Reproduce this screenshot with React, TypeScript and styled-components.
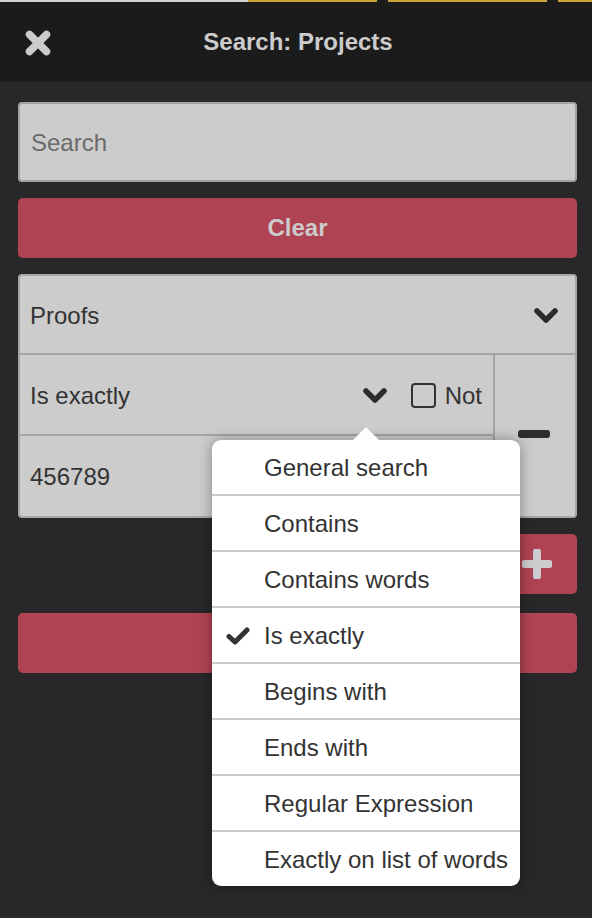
import React from "react";
import styled, { createGlobalStyle } from "styled-components";

const Global = createGlobalStyle`
  html, body { margin: 0; padding: 0; background: #282828; }
  body { font-family: "Liberation Sans", Arial, Helvetica, sans-serif; }
  * { box-sizing: border-box; }
`;

const Page = styled.div`
  width: 592px;
  min-height: 918px;
  background: #282828;
  display: flex;
  flex-direction: column;
`;

const TopStrip = styled.div`
  display: flex;
  height: 2px;
  background: #1b1b1b;
`;

const StripSeg = styled.div<{ $w?: number; $c: string }>`
  background: ${(p) => p.$c};
  ${(p) => (p.$w ? `width: ${p.$w}px;` : "flex: 1;")}
`;

const Header = styled.header`
  height: 80px;
  background: #1b1b1b;
  display: flex;
  align-items: center;
  justify-content: center;
  position: relative;
`;

const CloseBtn = styled.button`
  position: absolute;
  left: 25px;
  top: 28px;
  width: 26px;
  height: 26px;
  padding: 0;
  border: none;
  background: none;
  display: flex;
`;

const Title = styled.h1`
  margin: 0;
  font-size: 24px;
  font-weight: bold;
  color: #cccccc;
  padding-left: 4px;
`;

const Content = styled.main`
  position: relative;
  padding: 20px 15px 20px 18px;
  display: flex;
  flex-direction: column;
`;

const SearchInput = styled.div`
  height: 80px;
  background: #cccccc;
  border: 2px solid #a2a2a2;
  border-radius: 4px;
  display: flex;
  align-items: center;
  padding-left: 11px;
  padding-top: 2px;
  font-size: 24px;
  color: #6a6a6a;
`;

const RedButton = styled.button<{ $w?: number; $mt: number }>`
  height: 60px;
  margin-top: ${(p) => p.$mt}px;
  ${(p) => (p.$w ? `width: ${p.$w}px; align-self: flex-end;` : "width: 100%;")}
  background: #b04353;
  border: none;
  border-radius: 5px;
  color: #cccccc;
  font-family: inherit;
  font-size: 24px;
  font-weight: bold;
  display: flex;
  align-items: center;
  justify-content: center;
  padding: 0;
`;

const Group = styled.section`
  margin-top: 16px;
  background: #cccccc;
  border: 2px solid #a5a5a5;
  border-radius: 4px;
  display: grid;
  grid-template-columns: 1fr 80px;
  grid-template-rows: 79px 81px 80px;
`;

const Cell = styled.div<{ $span?: boolean; $bottom?: boolean; $right?: boolean }>`
  display: flex;
  align-items: center;
  padding: 2px 10px 0;
  font-size: 24px;
  color: #333333;
  ${(p) => (p.$span ? "grid-column: 1 / 3;" : "")}
  ${(p) => (p.$bottom ? "border-bottom: 2px solid #a5a5a5;" : "")}
  ${(p) => (p.$right ? "border-right: 2px solid #a5a5a5;" : "")}
`;

const CellText = styled.span`
  flex: 1;
`;

const MinusCell = styled.div`
  grid-column: 2;
  grid-row: 2 / 4;
  display: flex;
  align-items: center;
  justify-content: center;
  padding-right: 2px;
`;

const Chevron = styled.svg<{ $mr: number }>`
  width: 26px;
  height: 17px;
  margin-right: ${(p) => p.$mr}px;
`;

const CheckBox = styled.span`
  width: 25px;
  height: 25px;
  border: 2px solid #333;
  border-radius: 4px;
  margin-right: 9px;
`;

const NotLabel = styled.span`
  color: #333;
  margin-right: 1px;
`;

const Minus = styled.span`
  width: 32px;
  height: 8px;
  border-radius: 3px;
  background: #2e2e2e;
  margin-top: -4px;
`;

const PlusIcon = styled.svg`
  width: 30px;
  height: 30px;
  margin-left: 2px;
`;

const Popup = styled.div`
  position: absolute;
  left: 212px;
  top: 358px;
  width: 308px;
  background: #ffffff;
  border-radius: 9px;
  box-shadow: 0 0 14px rgba(0, 0, 0, 0.35);
  display: flex;
  flex-direction: column;
`;

const Arrow = styled.span`
  position: absolute;
  left: 140px;
  top: -13px;
  width: 0;
  height: 0;
  border-left: 14px solid transparent;
  border-right: 14px solid transparent;
  border-bottom: 14px solid #ffffff;
`;

const Item = styled.div<{ $last?: boolean }>`
  height: ${(p) => (p.$last ? 54 : 56)}px;
  display: flex;
  align-items: center;
  padding-top: 2px;
  font-size: 24px;
  color: #333333;
  ${(p) => (p.$last ? "" : "border-bottom: 2px solid #cccccc;")}
`;

const CheckSlot = styled.span`
  width: 52px;
  padding-left: 14px;
  display: flex;
  align-items: center;
`;

const chevron = (
  <path d="M4 4 L13 13 L22 4" fill="none" stroke="#2b2b2b" strokeWidth="5.5" strokeLinecap="round" strokeLinejoin="round" />
);

const items = [
  "General search",
  "Contains",
  "Contains words",
  "Is exactly",
  "Begins with",
  "Ends with",
  "Regular Expression",
  "Exactly on list of words",
];

export default function App() {
  return (
    <Page>
      <Global />
      <TopStrip>
        <StripSeg $w={248} $c="#d2d2d2" />
        <StripSeg $w={129} $c="#c9a23c" />
        <StripSeg $w={11} $c="#1b1b1b" />
        <StripSeg $w={159} $c="#c9a23c" />
        <StripSeg $w={11} $c="#1b1b1b" />
        <StripSeg $c="#c9a23c" />
      </TopStrip>
      <Header>
        <CloseBtn aria-label="Close">
          <svg width="26" height="26" viewBox="0 0 26 26">
            <path d="M4.5 4.5 L21.5 21.5 M21.5 4.5 L4.5 21.5" stroke="#cccccc" strokeWidth="7.5" strokeLinecap="round" />
          </svg>
        </CloseBtn>
        <Title>Search: Projects</Title>
      </Header>
      <Content>
        <SearchInput>Search</SearchInput>
        <RedButton $mt={16}>Clear</RedButton>
        <Group>
          <Cell $span $bottom>
            <CellText>Proofs</CellText>
            <Chevron $mr={6} viewBox="0 0 26 17">{chevron}</Chevron>
          </Cell>
          <Cell $bottom $right>
            <CellText>Is exactly</CellText>
            <Chevron $mr={23} viewBox="0 0 26 17">{chevron}</Chevron>
            <CheckBox />
            <NotLabel>Not</NotLabel>
          </Cell>
          <MinusCell>
            <Minus />
          </MinusCell>
          <Cell $right>
            <CellText>456789</CellText>
          </Cell>
        </Group>
        <RedButton $mt={16} $w={82} aria-label="Add">
          <PlusIcon viewBox="0 0 30 30">
            <path d="M15 3 V27 M3 15 H27" stroke="#cccccc" strokeWidth="8" strokeLinecap="round" />
          </PlusIcon>
        </RedButton>
        <RedButton $mt={19} />
        <Popup>
          <Arrow />
          {items.map((t, i) => (
            <Item key={t} $last={i === items.length - 1}>
              <CheckSlot>
                {t === "Is exactly" && (
                  <svg width="24" height="18" viewBox="0 0 24 18">
                    <path d="M3 9.5 L9 15 L21 3" fill="none" stroke="#333" strokeWidth="5" strokeLinecap="round" strokeLinejoin="round" />
                  </svg>
                )}
              </CheckSlot>
              {t}
            </Item>
          ))}
        </Popup>
      </Content>
    </Page>
  );
}
